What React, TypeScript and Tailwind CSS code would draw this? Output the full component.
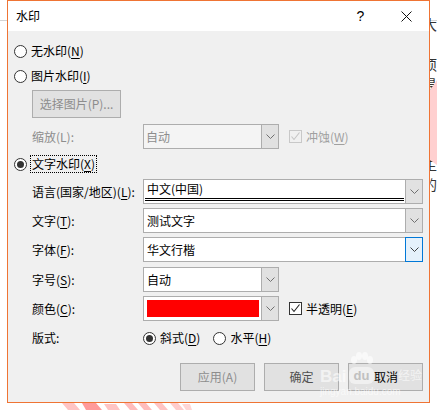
import React from "react";

function U({ children }: { children: React.ReactNode }) {
  return <span className="underline underline-offset-[2px] decoration-1">{children}</span>;
}

function Radio({ checked = false }: { checked?: boolean }) {
  return (
    <span className="w-[13px] h-[13px] rounded-full border border-[#333333] bg-white flex items-center justify-center shrink-0">
      {checked && <span className="w-[7px] h-[7px] rounded-full bg-[#333333]" />}
    </span>
  );
}

function Check({ disabled = false }: { disabled?: boolean }) {
  return (
    <span
      className={
        disabled
          ? "w-[13px] h-[13px] border border-[#c8c8c8] bg-[#f0f0f0] flex items-center justify-center shrink-0"
          : "w-[13px] h-[13px] border border-[#333333] bg-white flex items-center justify-center shrink-0"
      }
    >
      <svg width="11" height="11" viewBox="0 0 11 11">
        <polyline
          points="1.5,5.5 4,8.5 9.5,1.5"
          fill="none"
          stroke={disabled ? "#c4c4c4" : "#222222"}
          strokeWidth="1.1"
        />
      </svg>
    </span>
  );
}

function Chevron({ color = "#606060" }: { color?: string }) {
  return (
    <svg width="9" height="5" viewBox="0 0 9 5">
      <polyline points="0.5,0.5 4.5,4.5 8.5,0.5" fill="none" stroke={color} strokeWidth="1" />
    </svg>
  );
}

function Drop({ focused = false }: { focused?: boolean }) {
  return (
    <div
      className={
        focused
          ? "w-[18px] -my-px -mr-px border border-[#0078d7] bg-[#e5f1fb] flex items-center justify-center shrink-0"
          : "w-[18px] -my-px -mr-px border border-[#adadad] bg-[#e1e1e1] flex items-center justify-center shrink-0"
      }
    >
      <Chevron color={focused ? "#404040" : "#707070"} />
    </div>
  );
}

function Row({
  label,
  mt,
  children,
}: {
  label: React.ReactNode;
  mt: string;
  children: React.ReactNode;
}) {
  return (
    <div className={`${mt} ml-[18px] flex items-center h-[25px]`}>
      <div className="w-[111px] shrink-0 text-black">{label}</div>
      {children}
    </div>
  );
}

export default function App() {
  return (
    <div className="relative w-[437px] h-[410px] bg-white overflow-hidden text-[12px] leading-none font-['Noto_Sans_CJK_SC','Microsoft_YaHei',sans-serif]">
      {/* document behind dialog */}
      <div className="absolute left-0 top-[20px] w-[437px] h-px bg-[#d4d4d4]" />
      <div className="absolute left-[423px] top-0 w-[20px] text-[14px] leading-[20px] text-[#333333]">
        <div className="h-[14px]" />
        <div>大</div>
        <div className="h-[20px]" />
        <div>项</div>
        <div>最</div>
        <div>大</div>
        <div className="h-[20px]" />
        <div>大</div>
        <div>主</div>
        <div>的</div>
      </div>
      <svg className="absolute left-0 top-0" width="437" height="410" viewBox="0 0 437 410">
        <polygon points="430,90 437,80 437,165 430,160" fill="#ffd0d0" />
        <polygon points="62,403 74,403 80,410 68,410" fill="#ffc4c4" />
        <polygon points="82,403 96,403 102,410 86,410" fill="#ff9a9a" />
        <polygon points="104,404 116,404 120,410 108,410" fill="#ffc4c4" />
        <polygon points="124,403 132,403 138,410 130,410" fill="#ffbcbc" />
        <polygon points="138,403 146,403 152,410 144,410" fill="#ffbcbc" />
        <polygon points="154,403 162,403 168,410 160,410" fill="#ffc4c4" />
        <polygon points="170,403 178,403 184,410 176,410" fill="#ffcccc" />
        <polygon points="182,404 190,404 192,410 186,410" fill="#ffd6d6" />
      </svg>

      {/* dialog */}
      <div className="relative ml-[7px] w-[423px] h-[403px] border border-[#ef7434] bg-[#f0f0f0] flex flex-col">
        <div className="h-[30px] bg-white flex items-center shrink-0">
          <span className="pl-[8px] text-black text-[12px]">水印</span>
          <div className="flex-1" />
          <div className="w-[45px] h-[30px] flex items-center justify-center text-[14px] text-black font-['Liberation_Sans',sans-serif]">
            ?
          </div>
          <div className="w-[46px] h-[30px] flex items-center justify-center">
            <svg width="11" height="11" viewBox="0 0 11 11">
              <line x1="0.5" y1="0.5" x2="10.5" y2="10.5" stroke="#111111" strokeWidth="1" />
              <line x1="10.5" y1="0.5" x2="0.5" y2="10.5" stroke="#111111" strokeWidth="1" />
            </svg>
          </div>
        </div>

        <div className="flex flex-col px-[6px]">
          <div className="mt-[10px] h-[20px] flex items-center gap-[4px]">
            <Radio />
            <span className="text-black">
              无水印(<U>N</U>)
            </span>
          </div>
          <div className="mt-[5px] h-[20px] flex items-center gap-[4px]">
            <Radio />
            <span className="text-black">
              图片水印(<U>I</U>)
            </span>
          </div>
          <div className="mt-[4px] ml-[18px]">
            <div className="w-[89px] h-[28px] border border-[#adadad] bg-[#e1e1e1] flex items-center justify-center text-[#8d8d8d]">
              选择图片(P)...
            </div>
          </div>
          <div className="mt-[6px] ml-[18px] flex items-center h-[25px]">
            <div className="w-[111px] shrink-0 text-[#8d8d8d]">缩放(L):</div>
            <div className="w-[136px] h-[25px] flex border border-[#adadad] bg-[#f4f4f4]">
              <div className="flex-1 flex items-center pl-[2px] text-[#8d8d8d]">自动</div>
              <Drop />
            </div>
            <div className="ml-[10px] flex items-center gap-[4px]">
              <Check disabled />
              <span className="text-[#a0a0a0]">
                冲蚀(<U>W</U>)
              </span>
            </div>
          </div>

          <div className="mt-[6px] h-[18px] flex items-center">
            <Radio checked />
            <span className="ml-[3px] h-[18px] border border-dotted border-black px-[1px] flex items-center text-black">
              文字水印(<U>X</U>)
            </span>
          </div>

          <Row
            mt="mt-[6px]"
            label={
              <>
                语言(国家/地区)(<U>L</U>):
              </>
            }
          >
            <div className="w-[280px] h-[25px] flex border border-[#adadad] bg-white">
              <div className="flex-1 flex flex-col pl-px pr-px">
                <div className="flex-1 flex items-center pl-[2px] text-black">中文(中国)</div>
                <div className="h-px bg-black" />
                <div className="h-px bg-white" />
                <div className="h-px bg-black mb-[2px]" />
              </div>
              <Drop />
            </div>
          </Row>
          <Row
            mt="mt-[4px]"
            label={
              <>
                文字(<U>T</U>):
              </>
            }
          >
            <div className="w-[280px] h-[25px] flex border border-[#adadad] bg-white">
              <div className="flex-1 flex items-center pl-[3px] text-black">测试文字</div>
              <Drop />
            </div>
          </Row>
          <Row
            mt="mt-[4px]"
            label={
              <>
                字体(<U>F</U>):
              </>
            }
          >
            <div className="w-[280px] h-[25px] flex border border-[#adadad] bg-white">
              <div className="flex-1 flex items-center pl-[3px] text-black">华文行楷</div>
              <Drop focused />
            </div>
          </Row>
          <Row
            mt="mt-[5px]"
            label={
              <>
                字号(<U>S</U>):
              </>
            }
          >
            <div className="w-[136px] h-[25px] flex border border-[#adadad] bg-white">
              <div className="flex-1 flex items-center pl-[3px] text-black">自动</div>
              <Drop />
            </div>
          </Row>
          <Row
            mt="mt-[4px]"
            label={
              <>
                颜色(<U>C</U>):
              </>
            }
          >
            <div className="w-[136px] h-[25px] flex border border-[#adadad] bg-white">
              <div className="flex-1 py-[3px] pl-[3px] pr-[2px]">
                <div className="w-full h-full bg-[#ff0000]" />
              </div>
              <Drop />
            </div>
            <div className="ml-[10px] flex items-center gap-[4px]">
              <Check />
              <span className="text-black">
                半透明(<U>E</U>)
              </span>
            </div>
          </Row>

          <div className="mt-[7px] ml-[18px] h-[20px] flex items-center">
            <div className="w-[111px] shrink-0 text-black">版式:</div>
            <Radio checked />
            <span className="ml-[4px] text-black">
              斜式(<U>D</U>)
            </span>
            <span className="ml-[13px]">
              <Radio />
            </span>
            <span className="ml-[4px] text-black">
              水平(<U>H</U>)
            </span>
          </div>

          <div className="mt-[15px] flex justify-end gap-[9px]">
            <div className="w-[75px] h-[28px] border border-[#adadad] bg-[#e1e1e1] flex items-center justify-center text-[#8d8d8d]">
              应用(A)
            </div>
            <div className="w-[75px] h-[28px] border border-[#adadad] bg-[#e1e1e1] flex items-center justify-center text-[#505050]">
              确定
            </div>
            <div className="w-[75px] h-[28px] border border-[#adadad] bg-[#e1e1e1] flex items-center justify-end pr-[24px] text-black">
              取消
            </div>
          </div>
        </div>

        {/* Baidu watermark overlay */}
        <div className="absolute left-[312px] top-[348px] w-[104px] h-[50px] pointer-events-none">
          <svg className="absolute left-[28px] top-[2px]" width="28" height="18" viewBox="0 0 28 18">
            <ellipse cx="6" cy="9" rx="3" ry="4" fill="#ffffff" fillOpacity="0.6" />
            <ellipse cx="11" cy="5" rx="3" ry="4" fill="#ffffff" fillOpacity="0.6" />
            <ellipse cx="17" cy="5" rx="3" ry="4" fill="#ffffff" fillOpacity="0.6" />
            <ellipse cx="22" cy="9" rx="3" ry="4" fill="#ffffff" fillOpacity="0.6" />
          </svg>
          <div className="absolute left-0 top-[19px] text-[17px] font-bold leading-none text-white/60 font-['Liberation_Sans',sans-serif]">
            Bai
          </div>
          <div className="absolute left-[29px] top-[18px] w-[25px] h-[17px] rounded-[6px] bg-white/50 flex items-center justify-center text-[13px] font-bold leading-none text-[#c0c0c0] font-['Liberation_Sans',sans-serif]">
            du
          </div>
          <div className="absolute left-[78px] top-[20px] text-[12px] leading-none text-white/60">经验</div>
          <div className="absolute left-0 top-[38px] text-[10px] leading-none text-white/60 font-['Liberation_Sans',sans-serif]">
            jingyan.baidu.com
          </div>
        </div>
      </div>
    </div>
  );
}
